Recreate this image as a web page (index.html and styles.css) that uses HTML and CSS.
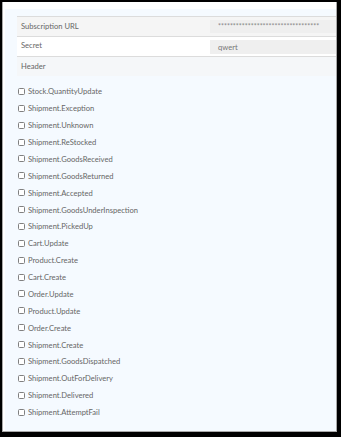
FILE: index.html
```html
<!DOCTYPE html>
<html>
<head>
<meta charset="utf-8">
<link rel="stylesheet" href="styles.css">
</head>
<body>
<div class="frame">
  <div class="win">
    <div class="panel">
      <div class="table">
        <div class="row row-gray">
          <div class="label">Subscription URL</div>
          <div class="input">**********************************</div>
        </div>
        <div class="row row-white">
          <div class="label">Secret</div>
          <div class="input input-tall">qwert</div>
        </div>
        <div class="row row-header">
          <div class="label">Header</div>
        </div>
      </div>
      <ul class="events">
        <li class="event"><span class="box"></span><span class="name">Stock.QuantityUpdate</span></li>
        <li class="event"><span class="box"></span><span class="name">Shipment.Exception</span></li>
        <li class="event"><span class="box"></span><span class="name">Shipment.Unknown</span></li>
        <li class="event"><span class="box"></span><span class="name">Shipment.ReStocked</span></li>
        <li class="event"><span class="box"></span><span class="name">Shipment.GoodsReceived</span></li>
        <li class="event"><span class="box"></span><span class="name">Shipment.GoodsReturned</span></li>
        <li class="event"><span class="box"></span><span class="name">Shipment.Accepted</span></li>
        <li class="event"><span class="box"></span><span class="name">Shipment.GoodsUnderInspection</span></li>
        <li class="event"><span class="box"></span><span class="name">Shipment.PickedUp</span></li>
        <li class="event"><span class="box"></span><span class="name">Cart.Update</span></li>
        <li class="event"><span class="box"></span><span class="name">Product.Create</span></li>
        <li class="event"><span class="box"></span><span class="name">Cart.Create</span></li>
        <li class="event"><span class="box"></span><span class="name">Order.Update</span></li>
        <li class="event"><span class="box"></span><span class="name">Product.Update</span></li>
        <li class="event"><span class="box"></span><span class="name">Order.Create</span></li>
        <li class="event"><span class="box"></span><span class="name">Shipment.Create</span></li>
        <li class="event"><span class="box"></span><span class="name">Shipment.GoodsDispatched</span></li>
        <li class="event"><span class="box"></span><span class="name">Shipment.OutForDelivery</span></li>
        <li class="event"><span class="box"></span><span class="name">Shipment.Delivered</span></li>
        <li class="event"><span class="box"></span><span class="name">Shipment.AttemptFail</span></li>
      </ul>
    </div>
  </div>
</div>
</body>
</html>
```

FILE: styles.css
```css
html, body {
  margin: 0;
  padding: 0;
  background: #fff;
}
body {
  font-family: Lato, "Open Sans", sans-serif;
  font-size: 7.6px;
  color: #666;
}
.frame {
  width: 341px;
  height: 437px;
  box-sizing: border-box;
  border-style: solid;
  border-color: #000;
  border-width: 2px 4px 5px 2px;
  display: flex;
}
.win {
  flex: 1;
  display: flex;
  flex-direction: column;
  background: #fff;
  border: 1px solid #a8a8a8;
  border-top: none;
  padding: 7px 0 0 2px;
}
.panel {
  flex: 1;
  background: #f5faff;
  padding: 7px 0 0 12px;
  overflow: hidden;
}
.table {
  border-top: 1px solid #dcdcdc;
}
.row {
  display: flex;
  align-items: flex-start;
  height: 19px;
  border-bottom: 1px solid #dcdcdc;
}
.row-gray { background: #f5f5f5; }
.row-white { background: #fff; }
.row-header {
  background: #f5f7f9;
  height: 19px;
  border-bottom: none;
}
.label {
  width: 189px;
  padding-left: 4px;
  line-height: 10px;
  padding-top: 4px;
}
.row-white .label { padding-top: 3px; }
.row-header .label { padding-top: 4px; }
.input {
  flex: 1;
  background: #efefef;
  margin-top: 3px;
  height: 13px;
  line-height: 12px;
  padding-left: 8px;
  font-size: 7px;
  color: #888;
  overflow: hidden;
  white-space: nowrap;
}
.input-tall {
  margin-top: 3px;
  height: 14px;
  line-height: 15px;
  font-size: 7.6px;
  color: #777;
}
.events {
  list-style: none;
  margin: 0;
  padding: 7px 0 0 1px;
}
.event {
  display: flex;
  align-items: center;
  height: 16.88px;
}
.box {
  width: 5px;
  height: 5px;
  border: 1px solid #808080;
  border-radius: 1.5px;
  background: #fff;
  margin-right: 3px;
}
.name {
  line-height: 10px;
}
```
